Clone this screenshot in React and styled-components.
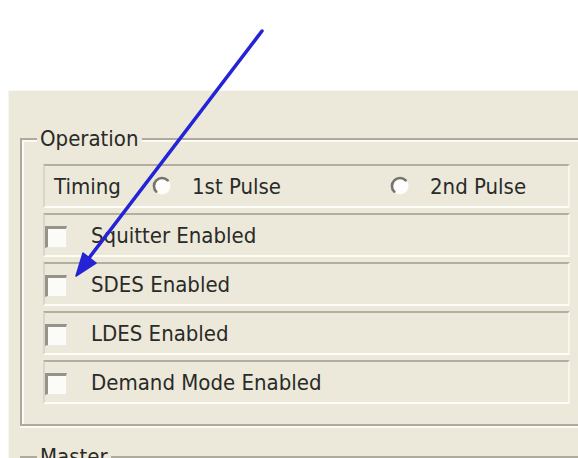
import React from "react";
import styled, { createGlobalStyle } from "styled-components";

const GlobalStyle = createGlobalStyle`
  html, body {
    margin: 0;
    padding: 0;
    background: #ffffff;
  }
  body {
    width: 578px;
    height: 458px;
    overflow: hidden;
    font-family: "DejaVu Sans Condensed", "DejaVu Sans", sans-serif;
    color: #2a2a28;
  }
`;

const Page = styled.div`
  position: relative;
  width: 578px;
  height: 458px;
  overflow: hidden;
  box-sizing: border-box;
  padding: 90px 0 0 8px;
  background: #ffffff;
`;

const Panel = styled.div`
  height: 100%;
  box-sizing: border-box;
  padding: 36px 0 0 12px;
  background: #ece9da;
  box-shadow: inset 1px 1px 0 #f7f6ef;
`;

const Group = styled.fieldset`
  width: 600px;
  margin: ${(p) => (p.$gap ? `${p.$gap}px` : "0")} 0 0 0;
  padding: 12px 0 20px 21px;
  min-width: 0;
  box-sizing: border-box;
  border: 2px solid #aeab9c;
  border-right: none;
  box-shadow: inset 2px 2px 0 #fbfaf4, 0 2px 0 #fbfaf4;
`;

const Legend = styled.legend`
  margin-left: -6px;
  padding: 0 3px;
  font-size: 22px;
  line-height: 26px;
  background: #ece9da;
  color: #2a2a28;
`;

const Row = styled.div`
  display: flex;
  align-items: center;
  width: 527px;
  height: 44px;
  box-sizing: border-box;
  margin-bottom: 5px;
  padding-left: ${(p) => p.$inset || 0}px;
  border-top: 2px solid #b2afa1;
  border-left: 2px solid #d9d6c9;
  border-bottom: 2px solid #fdfcf7;
  border-right: 2px solid #f6f5ee;
  font-size: 22px;
  &:last-child {
    margin-bottom: 0;
  }
`;

const FieldName = styled.span`
  width: 98px;
  flex: none;
`;

const Option = styled.label`
  display: flex;
  align-items: center;
  gap: 20px;
  width: ${(p) => p.$width}px;
  flex: none;
`;

const RadioMark = styled.svg`
  width: 20px;
  height: 20px;
  flex: none;
`;

const CheckBox = styled.span`
  width: 22px;
  height: 22px;
  flex: none;
  box-sizing: border-box;
  margin-top: 4px;
  margin-right: 24px;
  background: #fbfbf8;
  border-top: 3px solid #96938a;
  border-left: 3px solid #96938a;
  border-right: 1px solid #ecebe3;
  border-bottom: 1px solid #ecebe3;
`;

const Overlay = styled.svg`
  position: absolute;
  left: 0;
  top: 0;
  width: 578px;
  height: 458px;
  pointer-events: none;
`;

function Radio() {
  return (
    <RadioMark viewBox="0 0 20 20">
      <circle cx="10" cy="10" r="8.5" fill="#fdfdfb" />
      <path
        d="M4.3 15.7 A8 8 0 0 1 15.7 4.3"
        fill="none"
        stroke="#75736b"
        strokeWidth="2.6"
        strokeLinecap="round"
      />
    </RadioMark>
  );
}

function CheckRow({ children }) {
  return (
    <Row $inset={0}>
      <CheckBox />
      <span>{children}</span>
    </Row>
  );
}

export default function App() {
  return (
    <>
      <GlobalStyle />
      <Page>
        <Panel>
          <Group>
            <Legend>Operation</Legend>
            <Row $inset={9}>
              <FieldName>Timing</FieldName>
              <Option $width={238}>
                <Radio />
                <span>1st Pulse</span>
              </Option>
              <Option $width={160}>
                <Radio />
                <span>2nd Pulse</span>
              </Option>
            </Row>
            <CheckRow>Squitter Enabled</CheckRow>
            <CheckRow>SDES Enabled</CheckRow>
            <CheckRow>LDES Enabled</CheckRow>
            <CheckRow>Demand Mode Enabled</CheckRow>
          </Group>
          <Group $gap={18}>
            <Legend>Master</Legend>
          </Group>
        </Panel>
        <Overlay viewBox="0 0 578 458">
          <line
            x1="262"
            y1="31"
            x2="89"
            y2="258"
            stroke="#2424d6"
            strokeWidth="3.5"
            strokeLinecap="round"
          />
          <polygon
            points="76,276 96,263 83,253"
            fill="#2424d6"
            stroke="#2424d6"
            strokeWidth="1.5"
            strokeLinejoin="round"
          />
        </Overlay>
      </Page>
    </>
  );
}
